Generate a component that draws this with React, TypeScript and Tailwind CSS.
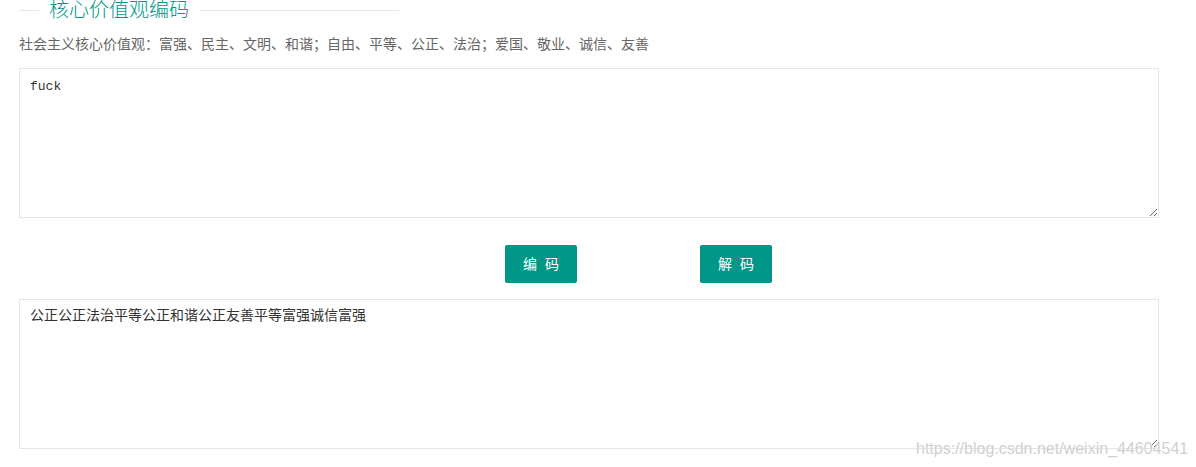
import React from "react";

export default function App() {
  const sans = "font-['Helvetica_Neue','Liberation_Sans','Noto_Sans_CJK_SC',sans-serif]";
  return (
    <div className={`relative w-full h-[467px] bg-white overflow-hidden ${sans}`}>
      <div className="flex items-center ml-[19px] w-[380px] h-[21px]">
        <div className="w-[20px] h-px bg-[#e6e6e6]" />
        <span className="px-[10px] text-[20px] leading-[21px] font-light text-[#009688]">核心价值观编码</span>
        <div className="flex-1 h-px bg-[#e6e6e6]" />
      </div>
      <p className="mt-[13px] ml-[19px] text-[14px] leading-[20px] text-[#666]">
        社会主义核心价值观：富强、民主、文明、和谐；自由、平等、公正、法治；爱国、敬业、诚信、友善
      </p>
      <textarea
        defaultValue="fuck"
        className="block mt-[14px] ml-[19px] w-[1140px] h-[150px] border border-[#e6e6e6] px-[10px] pt-[8px] pb-[4px] leading-[20px] text-[13px] text-[#333] resize-y outline-none font-['Liberation_Mono','Noto_Sans_CJK_SC',monospace]"
      />
      <div className="flex mt-[27px] pl-[505px] gap-[123px]">
        <button className="flex items-center justify-center gap-[8px] w-[72px] h-[38px] rounded-[2px] bg-[#009688] text-white text-[14px] leading-none">
          <span>编</span>
          <span>码</span>
        </button>
        <button className="flex items-center justify-center gap-[8px] w-[72px] h-[38px] rounded-[2px] bg-[#009688] text-white text-[14px] leading-none">
          <span>解</span>
          <span>码</span>
        </button>
      </div>
      <textarea
        defaultValue="公正公正法治平等公正和谐公正友善平等富强诚信富强"
        className="block mt-[16px] ml-[19px] w-[1140px] h-[150px] border border-[#e6e6e6] px-[10px] py-[6px] leading-[20px] text-[14px] text-[#333] resize-y outline-none font-['Liberation_Mono','Noto_Sans_CJK_SC',monospace]"
      />
      <div className="absolute left-[916px] top-[439px] text-[16px] leading-[20px] text-[#d0d0d0] font-['Liberation_Sans',sans-serif] whitespace-nowrap [text-shadow:0_0_1px_rgba(255,255,255,0.8)]">
        https://blog.csdn.net/weixin_44604541
      </div>
    </div>
  );
}
